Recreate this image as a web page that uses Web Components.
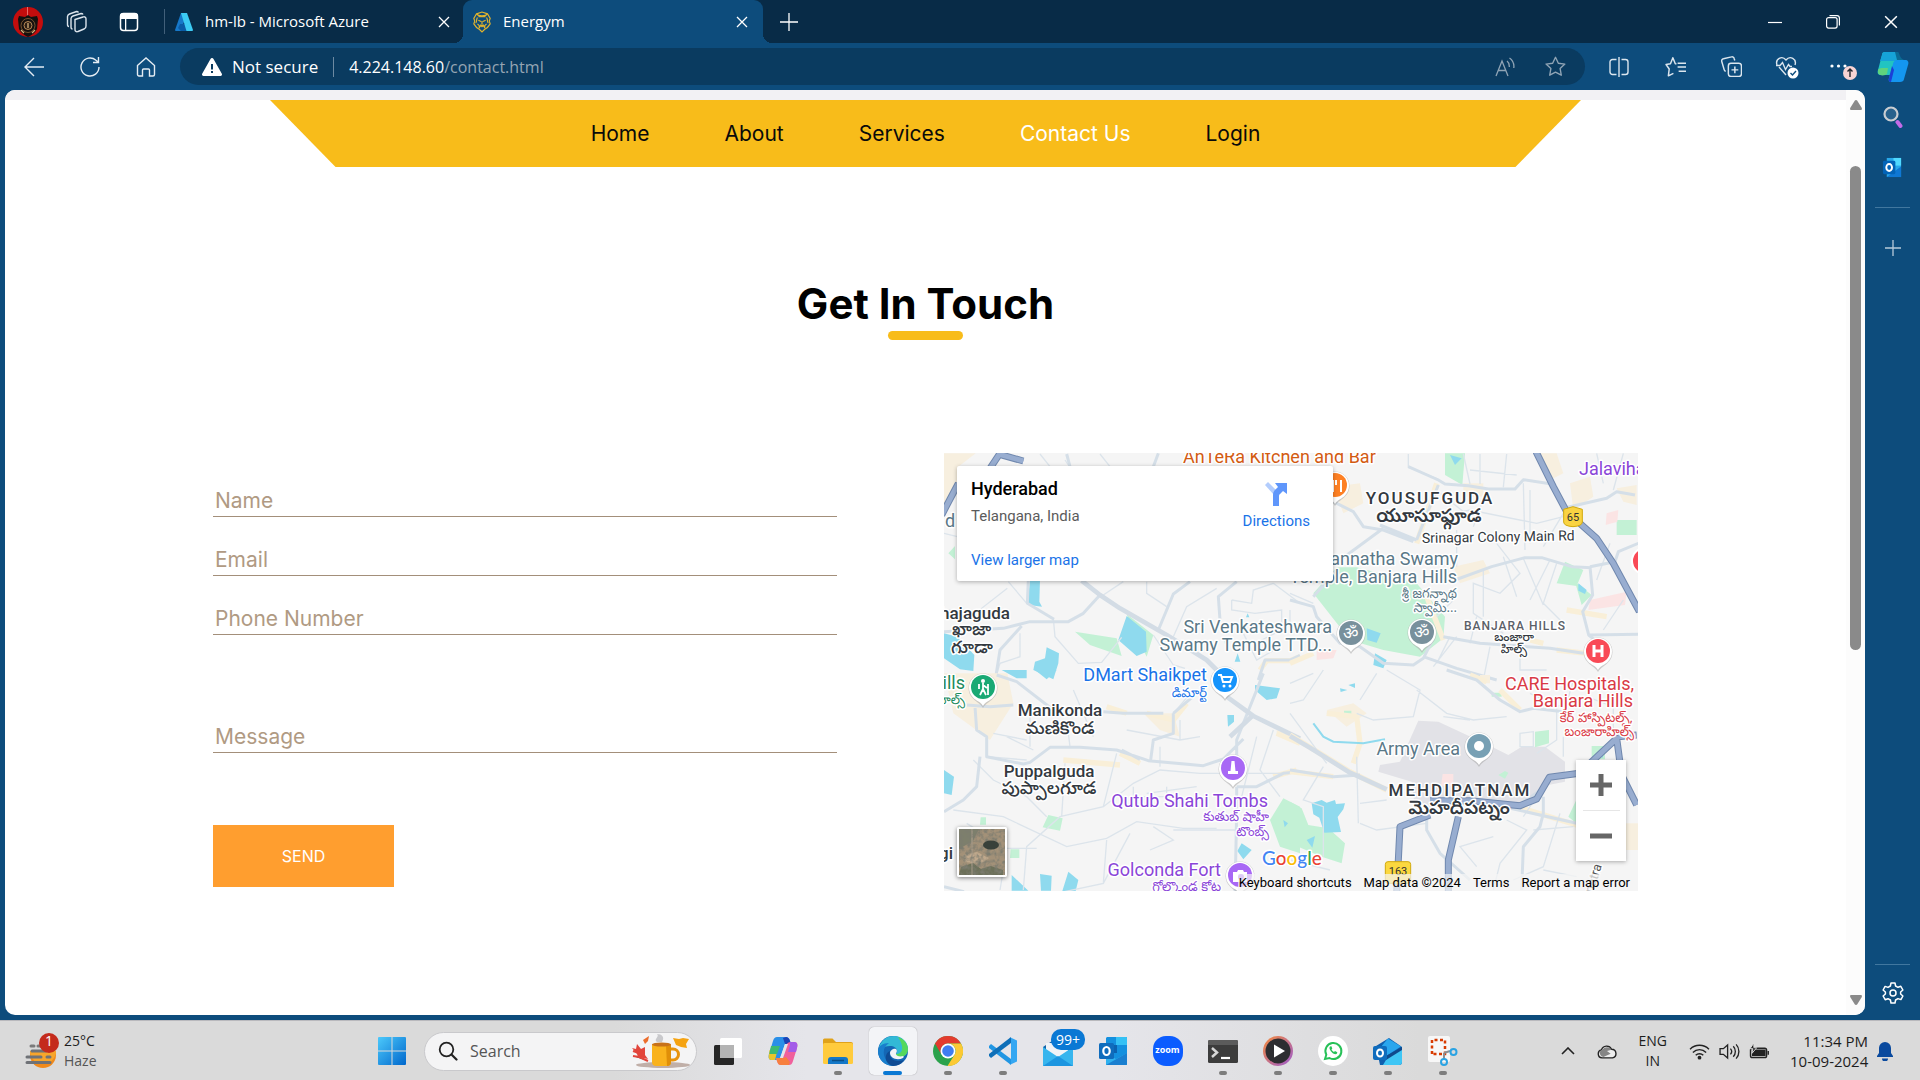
<!DOCTYPE html>
<html lang="en">
<head>
<meta charset="utf-8">
<title>Energym</title>
<style>
  html, body { margin: 0; height: 100%; }
  body { display: flex; flex-direction: column; overflow: hidden; background: #0d4c7c; font-family: "Open Sans", "Noto Sans", sans-serif; }
  .middle { display: flex; flex: 1; min-height: 0; }
</style>
</head>
<body>
<tab-strip></tab-strip>
<tool-bar></tool-bar>
<div class="middle">
  <page-view>
    <site-nav></site-nav>
    <section-title>Get In Touch</section-title>
    <contact-layout>
      <contact-form slot="form"></contact-form>
      <map-embed slot="map"></map-embed>
    </contact-layout>
  </page-view>
  <side-bar></side-bar>
</div>
<task-bar></task-bar>

<script>
const ICONS = {
  profile: ['0 0 30 30', `<circle cx="15" cy="15" r="15" fill="#c40d0d"/><path d="M14 0h1v10h-1z" fill="#e86a6a"/><path d="M15 8l3 2 6-1 1 3-1 10c-2 4-5 6-9 8-4-2-7-4-9-8L5 12l1-3 6 1z" fill="#15100e"/><circle cx="15" cy="18.500" r="7" fill="none" stroke="#77532f"/><circle cx="15" cy="18.500" r="4" fill="#2b1d12" stroke="#b98b58"/><path d="M15 16v5M8 23l3 3M22 23l-3 3" stroke="#d8b27c" stroke-width="1.300"/>`],
  workspaces: ['0 0 24 24', `<g fill="none" stroke="#dbe4ec" stroke-width="1.400"><path d="M10 9.500l8-2.500a2 2 0 0 1 3 2v7a3 3 0 0 1-2 3l-6 2.500a2 2 0 0 1-3-2z"/><path d="M7.500 19c-1 0-1.500-1-1.500-2V8.500a3 3 0 0 1 2-2.500l8-2.500c1 0 1.500 0 2 1"/><path d="M4 16.500c-1 0-1.500-1-1.500-2V6.500a3 3 0 0 1 2-2.500l7-2.500c1 0 1.500 0 2 1"/></g>`],
  tabs: ['0 0 20 20', `<rect x="1.500" y="1.500" width="17" height="17" rx="3" fill="none" stroke="#fff" stroke-width="1.500"/><path d="M1 7V4a3 3 0 0 1 3-3h12a3 3 0 0 1 3 3v3zM6 7h1.300v12H6z" fill="#fff"/>`],
  azure: ['0 0 20 20', `<path d="M7 1h6L7 19H2a1 1 0 0 1-1-1z" fill="#1678c9"/><path d="M6 12h9l-3 4 3 3H7l-3-3z" fill="#0a5ba6"/><path d="M7 1h6l6 17a1 1 0 0 1-1 1h-5.500z" fill="#3ccbf4"/>`],
  lion: ['0 0 22 24', `<g fill="none" stroke="#e0b32e" stroke-width="1.300"><path d="M5 3l6-2 6 2 3 5-1 3 1 3-3 4-3 2-3 3-3-3-3-2-3-4 1-3-1-3z"/><path d="M5 3c2 3 10 3 12 0M6 7c-2 3 0 5-2 6M16 7c2 3 0 5 2 6M7 10l3 1.500M15 10l-3 1.500M11 11v4M9 15l2 2 2-2M8 19c0-4 6-4 6 0M7 6h8M6 14l2 2v3M16 14l-2 2v3"/></g>`],
  close: ['0 0 12 12', `<path d="M1 1l10 10M11 1L1 11" stroke="#fff" stroke-width="1.300"/>`],
  plus: ['0 0 18 18', `<path d="M9 0v18M0 9h18" stroke="#fff" stroke-width="1.300"/>`],
  minimise: ['0 0 14 14', `<path d="M0 7.500h14" stroke="#fff" stroke-width="1.200"/>`],
  restore: ['0 0 14 14', `<g fill="none" stroke="#fff" stroke-width="1.200"><rect x=".600" y="2.600" width="10.500" height="10.500" rx="2"/><path d="M3.500.6H11a2.500 2.500 0 0 1 2.400 2.400v7.500"/></g>`],
  back: ['0 0 20 20', `<path d="M20 10H1M10 1L1 10l9 9" fill="none" stroke="#e4ecf3" stroke-width="1.400"/>`],
  refresh: ['0 0 20 20', `<path d="M19 10a9 9 0 1 1-3-6.700L18 5M18.500 0v5.500H13" fill="none" stroke="#e4ecf3" stroke-width="1.400"/>`],
  home: ['0 0 20 20', `<path d="M1.500 8.500L10 1l8.500 7.500v9a1.500 1.500 0 0 1-1.500 1.500h-3.500V13a1 1 0 0 0-1-1h-5a1 1 0 0 0-1 1v6H3a1.500 1.500 0 0 1-1.500-1.500z" fill="none" stroke="#e4ecf3" stroke-width="1.400"/>`],
  warning: ['0 0 20 18', `<path d="M8.500 1a1.700 1.700 0 0 1 3 0l8.200 14.500A1.600 1.600 0 0 1 18.300 18H1.700a1.600 1.600 0 0 1-1.400-2.500z" fill="#fff"/><path d="M9 6h2v5.500H9zM9 13h2v2H9z" fill="#0a3b60"/>`],
  aloud: ['0 0 20 20', `<g fill="none" stroke="#90a4b5" stroke-width="1.300"><path d="M1 19L7 4l6 15M3 13.500h8M12 4c2 1.500 2.500 3.500 2.300 6M14.500 1c3.500 2.500 4.800 6 4.300 10"/></g>`],
  star: ['0 0 20 20', `<path d="M10 1.200l2.700 5.700 6.200.8-4.500 4.300 1.100 6.300L10 15.300l-5.500 3 1.100-6.300L1 7.700l6.300-.8z" fill="none" stroke="#90a4b5" stroke-width="1.300" stroke-linejoin="round"/>`],
  split: ['0 0 20 20', `<g fill="none" stroke="#dce6ee" stroke-width="1.400"><path d="M10 0v20M7.500 2.500H3.500a2.500 2.500 0 0 0-2.500 2.500v10a2.500 2.500 0 0 0 2.500 2.500h4M12.500 2.500h4a2.500 2.500 0 0 1 2.500 2.500v10a2.500 2.500 0 0 1-2.500 2.500h-4"/></g>`],
  favs: ['0 0 20 20', `<path d="M11 7l-1.200-.2L7.500 1.200 5.200 6.900 1 7.600l3 4.300-.8 6.500L8 16M12 10h8M12 6.500h8M13 14h7" fill="none" stroke="#dce6ee" stroke-width="1.400" stroke-linejoin="round" transform="translate(0 .5)"/>`],
  collections: ['0 0 20 20', `<g fill="none" stroke="#dce6ee" stroke-width="1.400"><rect x="7" y="7" width="12.500" height="12.500" rx="2.500"/><path d="M13.200 10v6.500M10 13.200h6.500M4.500 14.500A2 2 0 0 1 3 13L.8 5.500a2 2 0 0 1 1.500-2.800L10 .8a2 2 0 0 1 2.500 1.500l.6 2"/></g>`],
  health: ['0 0 24 24', `<g fill="none" stroke="#dce6ee" stroke-width="1.400"><path d="M2 10c-2-6 5-10 9-5 4-5 11-1 9 5M4 12l7 8"/><path d="M1 10.500h4l2.500-3 3 7 3-5 1.500 2h2"/></g><circle cx="18" cy="18" r="5.500" fill="#fff"/><path d="M15.500 18l2 2 3.500-4" fill="none" stroke="#0d4c7c" stroke-width="1.400"/>`],
  more: ['0 0 28 26', `<g fill="#fff"><circle cx="3" cy="12" r="1.600"/><circle cx="9.500" cy="12" r="1.600"/><circle cx="16" cy="12" r="1.600"/></g><circle cx="21" cy="19" r="7" fill="#f8d3d3"/><path d="M21 23v-8M18.500 17.500l2.500-2.500 2.500 2.500" fill="none" stroke="#23252d" stroke-width="1.400"/>`],
  copilotEdge: ['0 0 32 32', `<path d="M8 1h11c2 0 3 2 2 4l-1 3-4 13c0 2-2 3-4 3H4c-3 0-4-2-3-5L5 4c0-2 1-3 3-3z" fill="#22c4c1"/><path d="M8 1h11c2 0 3 2 2 4l-2 5H3l2-6c0-2 1-3 3-3z" fill="#16a3d8"/><path d="M1 19c1-2 3-2 10-2l-1 6c-2 2-8 2-9-1z" fill="#5fd37d"/><path d="M20 9h8c3 0 4 2 3 5l-4 14c0 2-2 3-4 3h-9c-2 0-3-2-2-4l4-14c0-2 2-4 4-4z" fill="#1496f0"/><path d="M15 15l2 4-3 12c-2 0-3-2-2-4z" fill="#1b3fd6"/><path d="M18 1h3c2 1 1 6 6 8h-7z" fill="#0b6b96"/>`],
  magnifier: ['0 0 20 22', `<circle cx="8" cy="8" r="6.500" fill="#27618c" stroke="#c9cdd1" stroke-width="2.200"/><path d="M14.500 16l3 4" stroke="#c36be8" stroke-width="4" stroke-linecap="round"/>`],
  outlookSmall: ['0 0 22 22', `<path d="M5 1h15v20H5z" fill="#28a8ea"/><path d="M12 1h8v8h-8z" fill="#50d9ff"/><path d="M5 21l15-11v11z" fill="#0f78d4"/><rect x="1" y="4" width="13" height="14" rx="1.500" fill="#0364b8"/><ellipse cx="7.500" cy="11" rx="3" ry="3.600" fill="none" stroke="#fff" stroke-width="2"/>`],
  thinPlus: ['0 0 16 16', `<path d="M8 0v16M0 8h16" stroke="#b7cad9" stroke-width="1.300"/>`],
  gear: ['0 0 22 22', `<g fill="none" stroke="#fff" stroke-width="1.500" stroke-linejoin="round"><circle cx="11" cy="11" r="3"/><path d="M9 1h4l.6 3 2.400 1.300 2.800-1L20.900 8l-2.300 2v2l2.300 2-2 3.600-2.900-1L13.600 18 13 21H9l-.6-3L6 16.700l-2.800 1L1.100 14l2.300-2v-2L1.100 8l2-3.600 2.900 1L8.400 4z"/></g>`],
  haze: ['0 0 34 36', `<circle cx="18" cy="22" r="13" fill="#f18a1b"/><path d="M5 18a13 13 0 0 0 26 0z" fill="#f7a52b"/><path d="M0 0h18v18H0z" fill="#dadada"/><path d="M6 13h3M13 13h3" stroke="#7b7b7b" stroke-width="3" stroke-linecap="round"/><path d="M7 18h14M2 24h14M22 24h3M2 29.500h23" stroke="#6f7277" stroke-width="3" stroke-linecap="round"/><circle cx="24" cy="10" r="10" fill="#c42b1c"/>`],
  windows: ['0 0 30 30', `<defs><linearGradient id="w" x1="0" y1="0" x2="1" y2="1"><stop offset="0" stop-color="#4cc9fb"/><stop offset="1" stop-color="#0067cc"/></linearGradient></defs><path d="M1 2a1 1 0 0 1 1-1h12.500v13.500H1zM15.500 1H28a1 1 0 0 1 1 1v12.500H15.500zM1 15.500h13.500V29H2a1 1 0 0 1-1-1zM15.500 15.500H29V28a1 1 0 0 1-1 1H15.500z" fill="url(#w)"/>`],
  find: ['0 0 20 20', `<circle cx="8.500" cy="8.500" r="6.800" fill="none" stroke="#222" stroke-width="1.800"/><path d="M13.500 13.500l5 5" stroke="#222" stroke-width="2.200" stroke-linecap="round"/>`],
  mug: ['0 0 60 34', `<ellipse cx="32" cy="31" rx="27" ry="3" fill="#8c6a5c" opacity=".5"/><path d="M1 14l4 1 1-5 4 5 4-2 0 8 3 4-5-1-5-1-1-3z" fill="#e2453b"/><path d="M2 17l6 2M2 22l6 1 9 4" stroke="#e2453b" stroke-width="2"/><path d="M12 6l6-4-1 5-3 3z" fill="#ec6d2c"/><path d="M42 4l6 1 4-1 6 1-3 5 1 4-6-1-5-2z" fill="#f5a312"/><path d="M26 8c-4-3 3-5 0-8 5 0 8 3 5 8z" fill="#c9c9cc"/><path d="M39 15h3a5 5 0 0 1 0 11h-3" fill="none" stroke="#e8940f" stroke-width="3"/><path d="M21 10h19v18a4 4 0 0 1-4 4H25a4 4 0 0 1-4-4z" fill="#f9b21c"/><path d="M35 11h5v17a4 4 0 0 1-4 4z" fill="#e08f08"/><ellipse cx="30.500" cy="10.500" rx="9.500" ry="2" fill="#c8721a"/>`],
  taskview: ['0 0 30 30', `<rect x="1" y="9" width="20" height="20" rx="1.500" fill="#262626"/><rect x="7" y="2" width="22" height="20" rx="1.500" fill="#fff"/><rect x="7" y="9" width="14" height="13" fill="#b4b4b4"/>`],
  copilot: ['0 0 30 30', `<path d="M9 1h9c2 0 3 1 4 4l1 3h-6L13 20c-1 3-2 4-5 4H4c-3 0-4-2-3-6l4-13c1-3 2-4 4-4z" fill="#2a8fe8"/><path d="M1.500 14h8L7 24H4c-3 0-4-2-3-6z" fill="#e9c52b"/><path d="M3 10h9l-3 8H1.300z" fill="#3dba72"/><path d="M18 1c2 0 3 1 4 4l1 3h-6L15 2z" fill="#1c43b5"/><path d="M21 29h-8c-2 0-3-1-4-4l-1-3h6l4-12c1-3 2-4 5-4h3c3 0 4 2 3 6l-4 13c-1 3-2 4-4 4z" fill="#f0609c"/><path d="M22 6h4c3 0 4 2 3 6l-1 4h-8l2-7z" fill="#a35ce8"/><path d="M8 22h7l3-1 4 5-1 3h-8c-2 0-3-1-4-4z" fill="#f7803f"/><path d="M17 8h3l-5 14h-3z" fill="#e5e5ea"/>`],
  folder: ['0 0 30 30', `<path d="M0 4a1.500 1.500 0 0 1 1.500-1.500h8L13 6h15a2 2 0 0 1 2 2v6H0z" fill="#e0a21a"/><rect y="7" width="30" height="21" rx="1.500" fill="#ffcb3d"/><path d="M5 28v-4a3 3 0 0 1 3-3h14a3 3 0 0 1 3 3v4z" fill="#1478c8"/><path d="M9 24.500h12" stroke="#0b4f86" stroke-width="1.500"/>`],
  edge: ['0 0 30 30', `<circle cx="15" cy="15" r="15" fill="#1467b5"/><path d="M1 11C4 3 10 0 16 0c8 0 14 6 14 13 0 5-4 8-8 8-3 0-5-1-4-3 1-1 1-2 1-3 0-3-3-5-7-5-5 0-9 3-11 1z" fill="#32b9d6"/><path d="M20 1c6 2 10 7 10 12 0 5-4 8-8 8-3 0-5-1-4-3 8 0 8-8 2-17z" fill="#55d85c"/><path d="M0 15c0-5 5-8 11-8-4 3-6 6-5 12 1 5 5 9 10 10.900A15 15 0 0 1 0 15z" fill="#1a7fcd"/><path d="M12 15c-2 8 5 12 14 9-2 3-6 6-11 6-9-2-9-13-3-15z" fill="#0f4b94"/><path d="M18 13c2 2 0 4 0 5 0 2 4 3 7 2 1 0 1 1 0 2-6 3-13 0-13-5 0-2 3-5 6-4z" fill="#f3f4f7"/>`],
  chrome: ['0 0 30 30', `<circle cx="15" cy="15" r="15" fill="#2ba24c"/><path d="M2 7.500A15 15 0 0 1 28 7.500H15a7.500 7.500 0 0 0-6.500 11.200z" fill="#e33b2e"/><path d="M28 7.500A15 15 0 0 1 14.500 30l7-11.200A7.500 7.500 0 0 0 15 7.500z" fill="#fcc934"/><circle cx="15" cy="15" r="7.500" fill="#fff"/><circle cx="15" cy="15" r="5.800" fill="#3f7df0"/>`],
  vscode: ['0 0 30 30', `<path d="M1 10l2-2 20 15v6L1 12z" fill="#2196e3"/><path d="M1 20l2 2L23 7V1L1 18z" fill="#0f6fb8"/><path d="M21.500 1L29 4.500v21L21.500 29c1 0 1.500-.5 1.500-2V3c0-1.500-.5-2-1.500-2z" fill="#35a7f2"/>`],
  mail: ['0 0 32 32', `<path d="M1 12L16 2l15 10v18H1z" fill="#1365ab"/><path d="M4 8h22v12l-10 4L4 18z" fill="#f0f3f7"/><path d="M1 12l15 10L31 12v19H1z" fill="#37b5ee"/><path d="M1 31l15-10 15 10z" fill="#1c95e0"/>`],
  outlook: ['0 0 30 30', `<path d="M9 1h19a1 1 0 0 1 1 1v27H8V2z" fill="#1490df"/><path d="M18 1h10a1 1 0 0 1 1 1v7H18z" fill="#35c1f5"/><path d="M9 9h10v8H9z" fill="#0b62b0"/><path d="M8 29V17l10 6 11-6v11a1 1 0 0 1-1 1z" fill="#2fb0ee"/><path d="M8 29l21-12v11a1 1 0 0 1-1 1z" fill="#1a7fd0"/><rect x="1" y="7" width="15" height="16" rx="1.500" fill="#0f6cbd"/><ellipse cx="8.500" cy="15" rx="3.200" ry="4" fill="none" stroke="#fff" stroke-width="2.200"/>`],
  zoom: ['0 0 30 30', `<rect width="30" height="30" rx="13" fill="#0b5cff"/>`],
  terminal: ['0 0 30 30', `<rect y="4" width="30" height="23" rx="1.500" fill="#3c3c3c"/><path d="M0 9V5.500A1.500 1.500 0 0 1 1.500 4H28.500A1.500 1.500 0 0 1 30 5.500V9z" fill="#5b5b5b"/><path d="M4 12l5 4.500L4 21" fill="none" stroke="#d6d6d6" stroke-width="2.500"/><path d="M13 22h9" stroke="#fff" stroke-width="2.200"/>`],
  media: ['0 0 30 30', `<defs><linearGradient id="m" x1="0" y1="0" x2="1" y2="1"><stop offset="0" stop-color="#f58a3a"/><stop offset="1" stop-color="#9c5bd0"/></linearGradient></defs><circle cx="15" cy="15" r="15" fill="url(#m)"/><circle cx="15" cy="15" r="12.500" fill="#2d2d30"/><path d="M11 8.500v13L22 15z" fill="#fff"/>`],
  whatsapp: ['0 0 30 30', `<circle cx="15" cy="15" r="15" fill="#fff"/><path d="M7 23l1.300-4.300A8 8 0 1 1 11.500 22z" fill="none" stroke="#27c158" stroke-width="2"/><path d="M12 10.500c-1.500 1.500.5 4.500 2 6s4 2.500 5 1l.3-1.300-2.300-1.200-1 1c-1-.4-2-1.400-2.500-2.500l.8-1-.9-2.200z" fill="#27c158"/>`],
  outlookNew: ['0 0 30 30', `<path d="M3 10L16 2l13 9v15a3 3 0 0 1-3 3H7z" fill="#0f5fae"/><path d="M15 2.500l13 8-14 9-5-10z" fill="#2aa6ee"/><path d="M29 11v4L13 26V20z" fill="#104a8c"/><path d="M29 14v12a3 3 0 0 1-3 3H10l3-5z" fill="#3fc6f5"/><rect x="0" y="10" width="14" height="14" rx="2" fill="#0f6cbd"/><ellipse cx="7" cy="17" rx="3" ry="3.600" fill="none" stroke="#fff" stroke-width="2"/>`],
  snip: ['0 0 30 30', `<rect x="0" y="0" width="22" height="26" rx="2" fill="#f7f7f7"/><path d="M4 18V4h13v14z" fill="none" stroke="#d83b01" stroke-width="2.500" stroke-dasharray="3 2.500"/><path d="M16 17l6-2M16 17v6" stroke="#8b8f94" stroke-width="2"/><circle cx="25.500" cy="16" r="3" fill="none" stroke="#2aa3e3" stroke-width="2"/><circle cx="16" cy="26" r="3" fill="none" stroke="#2aa3e3" stroke-width="2"/>`],
  chevron: ['0 0 14 8', `<path d="M1 7l6-6 6 6" fill="none" stroke="#222" stroke-width="1.600"/>`],
  cloud: ['0 0 22 16', `<path d="M5.500 15a4.400 4.400 0 0 1-.6-8.700A6 6 0 0 1 16 5.500 4.800 4.800 0 0 1 17 15z" fill="#eee" stroke="#222" stroke-width="1.500"/><path d="M6 6a6 6 0 0 1 10 0l-5 1.500 4 3-8 3.500a4.400 4.400 0 0 1-3-7z" fill="#858585"/>`],
  wifi: ['0 0 22 18', `<g fill="none" stroke="#222" stroke-width="1.500"><path d="M1 6.500a14 14 0 0 1 20 0M4 10a9.800 9.800 0 0 1 14 0M7 13a5.600 5.600 0 0 1 8 0"/></g><circle cx="11" cy="15.500" r="2" fill="#222"/>`],
  speaker: ['0 0 22 18', `<g fill="none" stroke="#222" stroke-width="1.400"><path d="M1 6h3.500L9 2v14l-4.500-4H1z"/><path d="M12 6a4.500 4.500 0 0 1 0 6M15 3.500a8 8 0 0 1 0 11M18 1.500a11 11 0 0 1 0 15"/></g>`],
  battery: ['0 0 22 18', `<rect x="1.500" y="5.500" width="17" height="10" rx="2" fill="none" stroke="#222" stroke-width="1.500"/><path d="M3 7h14.500v7H3zM19.500 8.500H21v4h-1.500z" fill="#222"/><path d="M5 0L1 6h3l-1 5 5-6H5z" fill="#222" stroke="#dcdcdc"/>`],
  bell: ['0 0 18 20', `<path d="M9 1a6 6 0 0 1 6 6v5l2 3v1H1v-1l2-3V7a6 6 0 0 1 6-6z" fill="#0a4a9e"/><path d="M6 17.500h6a3 3 0 0 1-6 0z" fill="#0a4a9e"/>`],
  up: ['0 0 12 10', `<path d="M6 0c.6 0 1 .4 1.300.8L11.800 8c.3 1 0 2-1 2H1.200c-1 0-1.300-1-1-2L4.700.8C5 .4 5.400 0 6 0z" fill="#8a8a8a"/>`],
  down: ['0 0 12 10', `<path d="M6 10c.6 0 1-.4 1.300-.8L11.800 2c.3-1 0-2-1-2H1.200c-1 0-1.300 1-1 2l4.500 7.200c.3.400.7.800 1.300.8z" fill="#8a8a8a"/>`],
  directions: ['0 0 24 24', `<path d="M1 3l3-3 8 8-2 5z" fill="#b3cdfd"/><path d="M9 24V13c0-3 1-4 3-6l2-2-3-4h12v11l-4-3-3 3c-1 1-1 1-1 3v9z" fill="#5f96fb"/>`]
};

class UiIcon extends HTMLElement {
  constructor() { super(); this.attachShadow({ mode: 'open' }); }
  connectedCallback() {
    const [box, art] = ICONS[this.getAttribute('name')];
    const [, , w, h] = box.split(' ');
    const width = this.getAttribute('size') || w;
    const height = Math.round(width * h / w);
    this.shadowRoot.innerHTML = `<style>:host{display:inline-flex;flex:none}svg{display:block}</style><svg viewBox="${box}" width="${width}" height="${height}" aria-hidden="true">${art}</svg>`;
  }
}
customElements.define('ui-icon', UiIcon);

const define = (name, html) => {
  const tpl = document.createElement('template');
  tpl.innerHTML = html;
  customElements.define(name, class extends HTMLElement {
    constructor() {
      super();
      this.attachShadow({ mode: 'open' }).append(tpl.content.cloneNode(true));
    }
  });
};

const RESET = `*{box-sizing:border-box}button{border:0;background:none;padding:0;margin:0;font:inherit;color:inherit;display:flex;align-items:center;justify-content:center}`;

define('tab-strip', `<style>${RESET}
:host{display:flex;align-items:center;height:43px;background:#082b47;color:#fff;font-size:15px;padding-left:5px}
.profile{width:46px}.tool{width:52px}
.sep{width:1px;height:25px;background:#42607a;margin-left:9px}
.tab{display:flex;align-items:center;height:43px;width:298px;padding:0 7px 0 9px;gap:11px}
.tab span{flex:1;white-space:nowrap;line-height:20px;padding-bottom:2px}
.tab button{width:24px;height:24px}
.active{width:300px;padding-right:9px;background:#0d4c7c;border-radius:9px 9px 0 0;position:relative}
.active::before,.active::after{content:"";position:absolute;bottom:0;width:9px;height:9px}
.active::before{left:-9px;background:radial-gradient(circle at 0 0,transparent 9px,#0d4c7c 9px)}
.active::after{right:-9px;background:radial-gradient(circle at 100% 0,transparent 9px,#0d4c7c 9px)}
.new{width:24px;margin-left:14px}
.controls{display:flex;margin-left:auto}
.controls button{width:58px;height:43px}
</style>
<button class="profile" aria-label="Profile"><ui-icon name="profile"></ui-icon></button>
<button class="tool" aria-label="Workspaces"><ui-icon name="workspaces"></ui-icon></button>
<button class="tool" aria-label="Tab actions"><ui-icon name="tabs"></ui-icon></button>
<i class="sep"></i>
<div class="tab"><ui-icon name="azure"></ui-icon><span>hm-lb - Microsoft Azure</span><button aria-label="Close tab"><ui-icon name="close"></ui-icon></button></div>
<div class="tab active"><ui-icon name="lion" size="20"></ui-icon><span>Energym</span><button aria-label="Close tab"><ui-icon name="close"></ui-icon></button></div>
<button class="new" aria-label="New tab"><ui-icon name="plus"></ui-icon></button>
<div class="controls"><button aria-label="Minimise"><ui-icon name="minimise"></ui-icon></button><button aria-label="Restore"><ui-icon name="restore"></ui-icon></button><button aria-label="Close"><ui-icon name="close" size="14"></ui-icon></button></div>`);

define('tool-bar', `<style>${RESET}
:host{display:flex;align-items:center;height:47px;padding:0 5px 0 6px;background:#0d4c7c;color:#fff;font-size:16px}
button{width:56px;height:37px}
.address{flex:1;display:flex;align-items:center;height:37px;border-radius:19px;background:#0a3b60;margin:0 6px;padding:0 5px 0 22px}
.address button{width:50px}
.address .secure{width:auto;gap:10px;font-size:17px}
.sep{width:1px;height:20px;background:#6d8aa2;margin:0 15px}
.url{flex:1}.url span{color:#95a5b3}
.copilot{width:44px}
</style>
<button aria-label="Back"><ui-icon name="back"></ui-icon></button>
<button aria-label="Refresh"><ui-icon name="refresh"></ui-icon></button>
<button aria-label="Home"><ui-icon name="home"></ui-icon></button>
<div class="address">
<button class="secure"><ui-icon name="warning"></ui-icon>Not secure</button><i class="sep"></i>
<div class="url">4.224.148.60<span>/contact.html</span></div>
<button aria-label="Read aloud"><ui-icon name="aloud"></ui-icon></button><button aria-label="Add favourite"><ui-icon name="star" size="21"></ui-icon></button>
</div>
<button aria-label="Split screen"><ui-icon name="split"></ui-icon></button>
<button aria-label="Favourites"><ui-icon name="favs" size="21"></ui-icon></button>
<button aria-label="Collections"><ui-icon name="collections" size="21"></ui-icon></button>
<button aria-label="Browser essentials"><ui-icon name="health"></ui-icon></button>
<button aria-label="More"><ui-icon name="more"></ui-icon></button>
<button class="copilot" aria-label="Copilot"><ui-icon name="copilotEdge"></ui-icon></button>`);

define('side-bar', `<style>${RESET}
:host{display:flex;flex-direction:column;align-items:center;width:55px;padding-top:1px}
button{width:54px;height:51px}
hr{width:35px;height:1px;border:0;margin:14px 0;background:#41779f}
.foot{margin-top:auto;padding-bottom:2px;display:flex;flex-direction:column;align-items:center}
.foot hr{margin:0 0 2px}
</style>
<button aria-label="Search"><ui-icon name="magnifier"></ui-icon></button>
<button aria-label="Outlook"><ui-icon name="outlookSmall" size="21"></ui-icon></button>
<hr><button aria-label="Customise"><ui-icon name="thinPlus"></ui-icon></button>
<div class="foot"><hr><button aria-label="Settings"><ui-icon name="gear"></ui-icon></button></div>`);

define('page-view', `<style>
:host{display:flex;flex:1;min-width:0;margin:0 0 5px 5px;background:#fff;border-radius:10px;overflow:hidden;font-family:Inter,sans-serif}
main{flex:1;min-width:0;border-top:10px solid #f2f1f4}
.scroll{display:flex;flex-direction:column;align-items:center;width:19px;background:#fcfcfc;padding:10px 0;box-sizing:border-box}
.track{flex:1;padding-top:56px}
.thumb{width:11px;height:484px;border-radius:6px;background:#8a8a8a}
</style>
<main><slot></slot></main>
<div class="scroll"><ui-icon name="up"></ui-icon><div class="track"><div class="thumb"></div></div><ui-icon name="down"></ui-icon></div>`);

define('site-nav', `<style>
:host{display:block;padding:0 265px}
nav{display:flex;align-items:center;justify-content:center;gap:75px;height:67px;background:#f8bc1a;clip-path:polygon(0 0,100% 0,95% 100%,5% 100%)}
a{color:#0a0a0a;text-decoration:none;font-size:21px;line-height:24px}
a.on{color:#fff}
</style>
<nav><a href="#">Home</a><a href="#">About</a><a href="#">Services</a><a href="#" class="on">Contact Us</a><a href="#">Login</a></nav>`);

define('section-title', `<style>
:host{display:flex;flex-direction:column;align-items:center;padding:113px 0}
h2{margin:0;font-size:42px;line-height:48px;font-weight:700;color:#000}
i{width:75px;height:9px;margin-top:3px;border-radius:5px;background:#f8bc1a}
</style><h2><slot></slot></h2><i></i>`);

define('contact-layout', `<style>
:host{display:grid;grid-template-columns:minmax(0,624fr) minmax(0,694fr);gap:107px;padding:0 208px}
</style><slot name="form"></slot><slot name="map"></slot>`);

define('contact-form', `<style>
:host{display:block}
form{display:flex;flex-direction:column;align-items:stretch;gap:22px;padding-top:27px}
input{box-sizing:border-box;height:37px;width:100%;border:0;border-bottom:1px solid #a38f7a;background:none;padding:4px 2px 0;font:21px Inter,sans-serif;outline:0}
input::placeholder{color:#b09a83;opacity:1}
.message{margin-top:59px}
button{align-self:flex-start;width:181px;height:62px;margin-top:50px;border:0;background:#ff9e2f;color:#fff;font:16px Inter,sans-serif}
</style>
<form><input aria-label="Name" placeholder="Name"><input type="email" aria-label="Email" placeholder="Email"><input type="tel" aria-label="Phone Number" placeholder="Phone Number"><input class="message" aria-label="Message" placeholder="Message"><button type="button">SEND</button></form>`);

define('map-embed', `<style>${RESET}
:host{display:block;position:relative;height:438px;overflow:hidden;background:#f5f5f5;font-family:Roboto,sans-serif}
.canvas{display:block;width:100%;height:100%}
a{color:#1a73e8;text-decoration:none}
.card{position:absolute;left:13px;top:13px;width:376px;height:115px;background:#fff;border-radius:2px;box-shadow:0 1px 4px rgba(0,0,0,.3);display:flex;justify-content:space-between;padding:13px 23px 0 14px}
.place{display:flex;flex-direction:column;font-size:15px;line-height:18px}
.place b{font-size:18px;line-height:20px;font-weight:500;color:#000}
.place span{color:#5b5b5b;margin:8px 0 26px}
.dir{display:flex;flex-direction:column;align-items:center;gap:6px;font-size:15px;line-height:18px;padding-top:3px}
.zoom{position:absolute;right:12px;top:307px;width:50px;height:101px;background:#fff;box-shadow:0 1px 4px rgba(0,0,0,.3);display:flex;flex-direction:column;align-items:center}
.zoom button{width:50px;height:50px}
.zoom hr{width:37px;height:1px;margin:0;border:0;background:#e6e6e6}
.thumb{position:absolute;left:13px;top:374px;width:50px;height:50px;border:2px solid #fff;border-radius:2px;box-shadow:0 1px 4px rgba(0,0,0,.5)}
.legal{position:absolute;right:0;bottom:0;height:17px;display:flex;gap:12px;padding:0 8px 0 1px;background:rgba(245,245,245,.7);font-size:13px;line-height:17px;color:#000}
.legal a,.legal span{color:#000;white-space:nowrap}
.t{font-size:18px;paint-order:stroke;stroke:#fff;stroke-width:3px;stroke-linejoin:round}
.te{font-family:"Noto Sans Telugu","Noto Sans",sans-serif;font-size:13px}
.town{fill:#333940;font-weight:500;font-size:17px}.poi{fill:#5a7887}.pur{fill:#8a45d8}.red{fill:#d93a45}.blu{fill:#1a73e8}
.te.town{font-size:18px;font-weight:500}.te.big{font-size:19px;font-weight:600}.te.small{font-size:12px}
.area{letter-spacing:2px}
.end{text-anchor:end}.mid{text-anchor:middle}
.r{fill:none;stroke:#d5dfe8;stroke-width:9;stroke-linejoin:round}
.rr{fill:none;stroke:#d3dce5;stroke-width:14;stroke-linejoin:round}
.s{fill:none;stroke:#dce4eb;stroke-width:4}
.hb{fill:none;stroke:#7088ae;stroke-width:21;stroke-linejoin:round}
.h{fill:none;stroke:#98add0;stroke-width:15;stroke-linejoin:round}
.w{fill:#8fdaee}.g{fill:#c3f1d5}.tan{fill:none;stroke:#f9efd8;stroke-width:16;stroke-linejoin:round}.ta{fill:#f7efdf}.p{fill:#fbe4e4}
</style>
<svg class="canvas" viewBox="0 0 694 438" preserveAspectRatio="xMidYMid slice" role="img" aria-label="Map of Hyderabad">
<defs><g id="pin"><path d="M0 20c-3-5-7-6-10-9.500A14.500 14.500 0 1 1 10 10.500C7 14 3 15 0 20z" fill="#aaa" opacity=".55"/><path d="M0 18c-3-5-7-5-10-8.500A14 14 0 1 1 10 9.500C7 13 3 13 0 18z" fill="#fff"/></g></defs>
<rect width="694" height="438" fill="#f5f5f5"/>
<g transform="translate(-4 -3) scale(.33333)">
<path class="ta" d="M12 10h95L55 50v60L12 190z"/>
<path class="g" d="M25 310l20-22v40zM405 545l125 20 15 53-95-33zM560 492l80 63-20 65-50-100zM850 560l20 10-15 12z"/>
<path class="w" d="M270 390h30l-2 65 8 15-44-6zM12 550l40 10 51 55-3 48-40-5-48-33zM320 592l37 18-2 30-15 48-60-28 5-25 30-10zM560 498l58 47 2 60-30 13-55-48zM893 610l8 25h-17zM923 490l5 12h-10z"/>
<path class="s" d="M165 690l15-50 60-20v-70M340 505l5 55 70 80 70-3 60-75M640 555l60 90 35 10M375 30l20 30M480 12l30 38M12 480l100 5 90-70M205 395l55 65M680 470l-60-40v-35M700 560l40-90 90-55M875 450l60 10 5-40 60-20M875 450v30l70 10 80-10v60l-60 30M1050 480v60M1000 400l80 60M900 530l50 100 70-40M550 395l-60 40M12 250l40 10M300 12l30 38"/>
<path class="r" d="M480 435l-50 55-45 25H270l-80 20-178 10M245 528l-65 72-15 95M655 540l45-108 50-37M265 390l-3 70 80 48M840 510l-5-70 55-45M380 12l10 38M640 50l15-40"/>
<path class="rr" d="M425 392l55 43 60 40 140 80 120 75 60 60"/>
<path class="tan" d="M960 660l20-28h70l30-12"/><path class="r" d="M955 690l20-60h75l30-14"/>
<path class="hb" d="M150 55l28-42 72 20M5 195l50-95"/><path class="h" d="M150 55l28-42 72 20M5 195l50-95"/>
</g>
<g transform="translate(346 -3) scale(.33333)">
<path class="ta" d="M740 10h60l20 60-40 20zM840 100l60-20 10 60-60 40zM980 115l60-10v60l-40-10zM520 100h60v40h-60zM130 110l80-10 10 60-60 30zM490 350l90-20 20 40-90 30z"/>
<path class="g" d="M70 430l70-78 60 0 180 48 85 100-5 65-70 55-110-20-100-30zM465 10h60l-8 95-52-30zM825 335l55 25-20 48-60-8zM855 395l50 40-30 30zM980 210h60v45h-60z"/>
<path class="w" d="M230 535l42 15-12 28-28-8zM255 610l35 20-10 25-30-10zM480 15l35 10-20 20zM865 400l25 20-5 12-20-10z"/>
<path class="p" d="M900 450l110-25-5 40-110 15zM950 190l35-10-3 35-35 10zM80 600h60l-10 25-50 5z"/>
<path class="tan" d="M380 280l40-120 20-60M410 440l50 130M830 480l120 20M800 600l90 10M0 640l70-30M720 570l40 10"/>
<path class="s" d="M355 12v40l90 35M520 12l20 90M570 12v90M650 12l-10 100M700 100l5 200M590 120l-40 110M500 240v110M620 280l70 90-60 60-80-30v90l90 60M700 325l60 140M780 330l-60 120M800 340l-40 120 60 60M640 320l40 120M580 360v140M450 200l90-20 200 40 80-20M450 130l90 70M720 120v160M920 10l20 90M960 280l-40 110M500 560l-70 90M600 590l-20 100M690 600v60h80M500 440l-60 60M560 500l-20 80M1000 10l-30 110M1000 450l-60 90M0 430l70 30M440 640l40-80M820 190l-60 100M540 60l140 15"/>
<path class="r" d="M130 155l60 30 30 45 60 10M355 50l90 40 20 12 70 5 60 10h80l25-28 80 12M130 345l150-110M270 225l110 45M280 240l90 35M380 270l65-165M820 175l130-30 30-20 55 10M495 390l110-40 100-27h50l90 27 60 3M900 350l8 85-30 50 18 70 25 20M900 350l75-15 10-30 60-25M900 555l145-2M460 560l110 20 210 15 100 15M0 450l70 20 10 30 70 80 60 10 70 50 90 5 30-20 30-60M400 620l100 35 120 35M70 440l70-80"/>
<path class="hb" d="M738 5l52 105 40 75 90 80 50 75 78 145"/><path class="h" d="M738 5l52 105 40 75 90 80 50 75 78 145"/>
<path d="M849 170l28 8v38q0 12-28 14q-28-2-28-14v-38z" fill="#f9d342" stroke="#d1a90c" stroke-width="3"/>
</g>
<g transform="translate(-4 217) scale(.33333)">
<path class="ta" d="M12 10h190l18 90-70 110-110-80zM610 130h90l20 70-60-20zM1010 180l70 30v15l-70-30z"/>
<path class="g" d="M325 435l43 10-8 37-52-10zM122 442h16v22h-18zM212 538h26v26h-28zM1030 385l50 25v140l-60-20-30-80z"/>
<path class="w" d="M12 300l30 20-7 55-23-5zM185 0h75v25h-30zM285 0h65l-30 28zM945 45l75 10-10 30-30 5-35-30zM862 135h20v20l-18 15zM905 520l30 20-25 28-18-25zM300 612l35 5-2 45h-30zM385 605l30 25-8 33h-40zM215 615l50 47h-50zM1030 450l14 10-10 12z"/>
<path class="tan" d="M370 270l170 15M500 110l60 20M620 130l80 20 40-50M1010 190l70 30M540 250l60 30M1000 320l70-20"/>
<path class="s" d="M270 120v110M385 190l5 40M400 60l60 140M530 250l-40 160-130 30-100 90-10 130M375 280l-10 160M100 270l60 60 100 50 60 60M40 420l150 20 190 90 120-25 90-50 140 20h100M80 460l120 75h90M500 510l-10 130-140 30M200 540l-20 120M490 410l90-70 80-40 120 10h300M580 350v30h100v-30M620 370l150-20M660 230v60M720 150v60M560 180l160 30 60-10M950 200l-50 200M1000 180l-40 120 60 80M640 470l60 40-70 30M760 60l-60 70M200 200l80 40M140 260l120 10M700 480h230M570 490l-80 150M160 190l100 20"/>
<path class="r" d="M170 15l60 20 110 85M80 105l70 5 70-5M105 110l5 70 30 20v60l110 22 20-5 60-45h90l110 8 95 32 165 15 60-20 60-60M120 260l-10 90-40 40-58 35M490 125l60 5 120 0M700 130l70-60M700 130v60l-60 20-8 60M970 10l-80 200v60M890 350h60l80-40 50-5M890 350v80l-5 240M12 650l60 15M545 240l55 28"/>
<path class="rr" d="M860 80l80 58 140 68M870 200l70-65"/>
</g>
<g transform="translate(346 217) scale(.33333)">
<path d="M385 152l60 3 150 70 60 30 40-25h70l60 45v60l-50 10-60 50-340 20-10-80-100-30 5-20 60-10z" fill="#e2e2e7"/>
<path class="ta" d="M110 120l80-20 40 30-60 40zM990 460h55v80h-55zM570 15h30v25h-30z"/>
<path class="g" d="M0 395l35 20 20 50 60 10 50 45-10 60-60-20-95-40zM162 122h22v22h-22zM605 68h30v12h-30zM735 185l42-5v40l-42 12zM905 228h40v40h-40zM835 440l24-50v70zM625 315l20-12 10 5-10 18z"/>
<path class="w" d="M65 400l30-10 15 8 25-8 3 12 27-2-5 18-17 23 10 45-50 2-15-45-18-10zM50 510l25-12-8 35zM150 55l22 5-20 6zM175 45l20-5v14zM930 255l12-8-5 18z"/>
<path class="p" d="M458 312h32v35h-37z"/>
<path class="tan" d="M0 195l180 110 110 55M110 130l90 10 10 80-20 60M630 60l60 60M0 305l130 15M680 410l180 55M540 15l50 20"/>
<path class="s" d="M0 40l70-30M100 0l-60 90-40 10M290 0l100 60-20 80-120 10-50-20M380 60l90 70 80 20 100-10M210 90l50-80M460 140l80 10M0 130l110 150M100 290l-60 100 60 20v150M205 460l-5-200M210 400l80-10M210 460l50 20 150-20M650 450l60 30-80 100-20 80M700 440l40-60M720 70l80 40 90-30 80 30v100M800 110v100l-60 40M690 190v40h40v-45zM850 30l-20 70M560 590l-50-60 100-30M810 430l-50 160-90 40M760 600l100 20M820 200v60M0 570l120 30M730 480l120-10"/>
<path class="r" d="M470 0l90 30 70 60 60 35 40-10 90 10M0 300l130 20 80-5M410 440v40l40 70 90 80M760 380v50l-10 40-50 60-5 130M640 410l220 50"/>
<path class="rr" d="M0 198l60 35 120 75 110 50M560 390l130 15 60-40"/>
<path d="M70 160l30 40 30 15 90 5 65-12" fill="none" stroke="#8fdaee" stroke-width="6"/>
<path class="hb" d="M320 670l10-200 90-35M420 392h120l150 15 50-20 38-65 90-12 112-105 15 110 45 90M505 440l-30 130v100M985 200l55-5"/>
<path class="h" d="M320 670l10-200 90-35M420 392h120l150 15 50-20 38-65 90-12 112-105 15 110 45 90M505 440l-30 130v100M985 200l55-5"/>
<rect x="286" y="575" width="76" height="65" rx="8" fill="#fbd83f" stroke="#d1a90c" stroke-width="3"/>
</g>
<text class="t" x="239" y="10" fill="#d35b12">AnTeRa Kitchen and Bar</text>
<text class="t pur" x="635" y="22">Jalavihar</text>
<text class="t town area mid" x="486" y="51">YOUSUFGUDA</text><text class="t te town big mid" x="485" y="69">యూసూఫ్గూడ</text>
<text class="t" x="478" y="90" style="font-size:14px;fill:#333940" transform="rotate(-1 478 90)">Srinagar Colony Main Rd</text>
<text class="t poi end" x="514" y="112">annatha Swamy</text><text class="t poi end" x="513" y="130">Temple, Banjara Hills</text>
<text class="t te poi end" x="513" y="145">శ్రీ జగన్నాథ</text><text class="t te poi end" x="513" y="159">స్వామీ...</text>
<text class="t town" x="-4" y="166">hajaguda</text><text class="t te town" x="8" y="182">ఖాజా</text><text class="t te town" x="7" y="200">గూడా</text>
<text class="t poi" x="1" y="74">d</text>
<text class="t poi end" x="388" y="180">Sri Venkateshwara</text><text class="t poi end" x="388" y="198">Swamy Temple TTD...</text>
<text class="t mid" x="571" y="177" style="fill:#5b6068;font-size:12px;font-weight:500;letter-spacing:1px">BANJARA HILLS</text><text class="t te town small mid" x="570" y="188">బంజారా</text><text class="t te town small mid" x="570" y="200">హిల్స్</text>
<text class="t blu end" x="263" y="228">DMart Shaikpet</text><text class="t te blu end" x="263" y="244">డిమార్ట్</text>
<text class="t end" x="21" y="236" fill="#1c8a5c">Hills</text><text class="t te end" x="21" y="251" fill="#1c8a5c">హిల్స్</text>
<text class="t town mid" x="116" y="263">Manikonda</text><text class="t te town mid" x="116" y="281">మణికొండ</text>
<text class="t town mid" x="105" y="324">Puppalguda</text><text class="t te town mid" x="105" y="341">పుప్పాలగూడ</text>
<text class="t red end" x="690" y="237">CARE Hospitals,</text><text class="t red end" x="689" y="254">Banjara Hills</text><text class="t te red end" x="689" y="269">కేర్ హాస్పిటల్స్,</text><text class="t te red end" x="690" y="283">బంజారాహిల్స్</text>
<text class="t poi end" x="516" y="302">Army Area</text>
<text class="t town area mid" x="516" y="343">MEHDIPATNAM</text><text class="t te town big mid" x="515" y="361">మెహదీపట్నం</text>
<text class="t pur end" x="324" y="354">Qutub Shahi Tombs</text><text class="t te pur end" x="325" y="368">కుతుబ్ షాహీ</text><text class="t te pur end" x="325" y="383">టొంబ్స్</text>
<text class="t pur end" x="277" y="423">Golconda Fort</text><text class="t te pur end" x="277" y="438">గోల్కొండ కోట</text>
<text class="t town end" x="9" y="406">gi</text>
<text class="mid" x="629" y="68" style="font-size:11px;fill:#333">65</text><text class="mid" x="454" y="422" style="font-size:11px;fill:#333">163</text>
<text class="t" style="font-size:13px" transform="rotate(-72 650 437)" x="646" y="437" fill="#555">natra</text>
<g transform="translate(391 33)"><use href="#pin"/><circle r="12" fill="#fd8024" cy="-1"/><path d="M-5-6v5M-2-6v5M1-6v5M-2-1v7M6-6v12" stroke="#fff" stroke-width="2"/></g>
<g transform="translate(407 181)"><use href="#pin"/><circle r="12" fill="#78909c" cy="-1"/><text class="mid" y="5" style="fill:#fff;font-family:sans-serif;font-size:17px">ॐ</text></g>
<g transform="translate(478 180)"><use href="#pin"/><circle r="12" fill="#78909c" cy="-1"/><text class="mid" y="5" style="fill:#fff;font-family:sans-serif;font-size:17px">ॐ</text></g>
<g transform="translate(281 228)"><use href="#pin"/><circle r="12" fill="#1593fb" cy="-1"/><path d="M-7-6h3l2 7h7l2-5H-3" fill="none" stroke="#fff" stroke-width="2"/><circle cx="-1" cy="5" r="1.500" fill="#fff"/><circle cx="5" cy="5" r="1.500" fill="#fff"/></g>
<g transform="translate(39 235)"><use href="#pin"/><circle r="12" fill="#19a974" cy="-1"/><circle cy="-7" r="2" fill="#fff"/><path d="M0-5v6l3 6M0 1l-3 6M0-3l4 3M5-4v11M-4-4v5" stroke="#fff" stroke-width="1.800" fill="none"/></g>
<g transform="translate(654 199)"><use href="#pin"/><circle r="12" fill="#f94a56" cy="-1"/><path d="M-4-7v12M4-7v12M-4-1h8" stroke="#fff" stroke-width="3"/></g>
<circle cx="701" cy="108" r="13" fill="#f94a56" stroke="#fff" stroke-width="2"/>
<g transform="translate(535 294)"><use href="#pin"/><circle r="12" fill="#78a0b4" cy="-1"/><circle r="5" cy="-1" fill="#fff"/></g>
<g transform="translate(289 316)"><use href="#pin"/><circle r="12" fill="#a868f5" cy="-1"/><path d="M-1.500-8h3l1 10H5v3H-5V2h2.500z" fill="#fff"/></g>
<g transform="translate(296 423)"><use href="#pin"/><circle r="12" fill="#a868f5" cy="-1"/><path d="M-7-4h4l1-2h5l1 2h3V6H-7z" fill="#fff"/><circle cx="1" cy="1" r="3" fill="#a868f5"/></g>
<text class="t" x="318" y="412" style="font-family:Lato,sans-serif;font-size:19px;font-weight:500"><tspan fill="#4285f4">G</tspan><tspan fill="#ea4335">o</tspan><tspan fill="#fbbc05">o</tspan><tspan fill="#4285f4">g</tspan><tspan fill="#34a853">l</tspan><tspan fill="#ea4335">e</tspan></text>
</svg>
<div class="card"><div class="place"><b>Hyderabad</b><span>Telangana, India</span><a href="#">View larger map</a></div><a class="dir" href="#"><ui-icon name="directions"></ui-icon>Directions</a></div>
<button class="thumb" aria-label="Satellite view"><svg viewBox="0 0 46 46" width="46" height="46"><defs><filter id="ground" x="0" y="0" width="100%" height="100%"><feTurbulence type="fractalNoise" baseFrequency=".22" numOctaves="3" seed="4"/><feColorMatrix values="0 0 0 0 .2  0 0 0 0 .2  0 0 0 0 .16  0 2.200 0 0 -.8"/></filter></defs><rect width="46" height="46" fill="#a39178"/><path d="M0 0h20l-6 12-14 8z" fill="#7d7f6c"/><path d="M2 38l12-4 8 6 10-3 12 4v5H0z" fill="#6c7059"/><path d="M4 26l14-3 12 6-8 6-16-2z" fill="#bfa88c"/><path d="M13 0v46" stroke="#b5a592"/><rect width="46" height="46" filter="url(#ground)"/><ellipse cx="32" cy="16" rx="8" ry="4.500" fill="#39413a"/></svg></button>
<div class="zoom"><button aria-label="Zoom in"><svg width="22" height="22"><path d="M11 0v22M0 11h22" stroke="#666" stroke-width="5"/></svg></button><hr><button aria-label="Zoom out"><svg width="22" height="22"><path d="M0 11h22" stroke="#666" stroke-width="5"/></svg></button></div>
<div class="legal"><span>Keyboard shortcuts</span><span>Map data ©2024</span><a href="#">Terms</a><a href="#">Report a map error</a></div>`);

define('task-item', `<style>${RESET}
:host{display:block}
button{width:55px;height:60px;position:relative}
.tile{display:flex;align-items:center;justify-content:center;width:48px;height:48px;border-radius:5px}
.dot{position:absolute;bottom:6px;left:24px;width:8px;height:4px;border-radius:2px;background:#7d7d7d;display:none}
:host([open]) .dot{display:block}
:host([active]) .dot{display:block;left:18px;width:19px;background:#0a78d4}
:host([active]) .tile{background:#f3f4f7;box-shadow:0 0 1px rgba(0,0,0,.4)}
::slotted(.badge){position:absolute;left:21px;top:8px;height:21px;padding:0 5px;border-radius:10px;background:#0a78d4;color:#fff;font-size:14px;line-height:21px}
::slotted(.word){position:absolute;left:0;right:0;top:22px;color:#fff;font-size:9px;line-height:14px;font-weight:700;text-align:center}
</style><button><span class="tile"><slot></slot></span><i class="dot"></i></button>`);

define('task-bar', `<style>${RESET}
:host{box-sizing:border-box;display:grid;grid-template-columns:364px auto 1fr;align-items:center;height:60px;background:linear-gradient(90deg,#dadada 0,#dadada 32%,#e5e5ea 42%,#e5e5ea 58%,#dadada 74%);border-top:1px solid #b9b9bd;color:#1d1d1d;font-size:14px;line-height:20px}
.weather{display:flex;align-items:center;padding-left:25px;gap:5px;text-align:left;position:relative;justify-content:flex-start}
.weather .n{position:absolute;left:39px;top:0;width:20px;text-align:center;color:#fff}
.weather small{display:block;font-size:14px;color:#555}
.apps{display:flex;align-items:center}
.search{display:flex;align-items:center;width:273px;height:39px;margin:0 3px 0 5px;border-radius:20px;background:#f4f4f5;border:1px solid #c9c9cc;padding:0 5px 0 13px;gap:12px}
.search input{flex:1;min-width:0;border:0;background:none;font:16px "Open Sans",sans-serif;color:#333;outline:0;padding:0}
.search input::placeholder{color:#555;opacity:1}
.tray{display:flex;align-items:center;justify-content:flex-end;padding-right:26px}
.lang{margin:0 22px;text-align:center}
.cloud{margin-left:22px}.net{gap:9px;display:flex}
.clock{margin:0 8px 0 20px;width:78px;text-align:right;white-space:nowrap;font-size:15px}
</style>
<button class="weather"><ui-icon name="haze"></ui-icon><span class="n">1</span><span>25°C<small>Haze</small></span></button>
<div class="apps">
<task-item><ui-icon name="windows"></ui-icon></task-item>
<label class="search"><ui-icon name="find"></ui-icon><input type="text" placeholder="Search" aria-label="Search"><ui-icon name="mug"></ui-icon></label>
<task-item><ui-icon name="taskview"></ui-icon></task-item>
<task-item><ui-icon name="copilot"></ui-icon></task-item>
<task-item open><ui-icon name="folder"></ui-icon></task-item>
<task-item active><ui-icon name="edge"></ui-icon></task-item>
<task-item open><ui-icon name="chrome"></ui-icon></task-item>
<task-item open><ui-icon name="vscode"></ui-icon></task-item>
<task-item><ui-icon name="mail"></ui-icon><span class="badge">99+</span></task-item>
<task-item><ui-icon name="outlook"></ui-icon></task-item>
<task-item><ui-icon name="zoom"></ui-icon><span class="word">zoom</span></task-item>
<task-item open><ui-icon name="terminal"></ui-icon></task-item>
<task-item open><ui-icon name="media"></ui-icon></task-item>
<task-item open><ui-icon name="whatsapp"></ui-icon></task-item>
<task-item open><ui-icon name="outlookNew"></ui-icon></task-item>
<task-item open><ui-icon name="snip"></ui-icon></task-item>
</div>
<div class="tray">
<button aria-label="Hidden icons"><ui-icon name="chevron"></ui-icon></button>
<ui-icon class="cloud" name="cloud" size="20"></ui-icon>
<button class="lang">ENG<br>IN</button>
<div class="net"><ui-icon name="wifi" size="21"></ui-icon><ui-icon name="speaker" size="21"></ui-icon><ui-icon name="battery" size="21"></ui-icon></div>
<div class="clock">11:34 PM<br>10-09-2024</div>
<button aria-label="Notifications"><ui-icon name="bell"></ui-icon></button>
</div>`);
</script>
</body>
</html>
